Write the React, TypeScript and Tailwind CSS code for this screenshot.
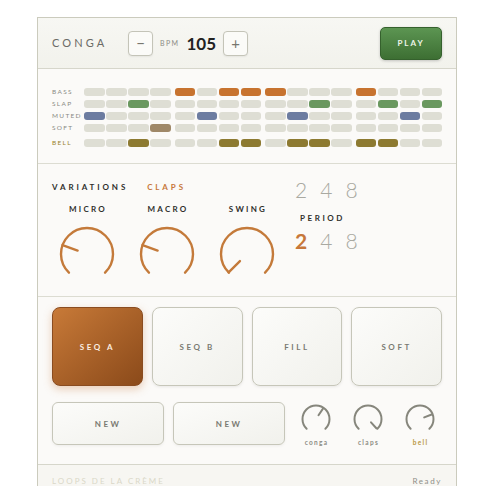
import React from 'react';

const font = { fontFamily: 'Lato, "Open Sans", sans-serif' };

type Row = { name: string; on: number[]; color: string; label: string };

const rows: Row[] = [
    { name: 'BASS', on: [5, 7, 8, 9, 13], color: 'bg-[#c7732f]', label: 'text-[#8a8a84]' },
    { name: 'SLAP', on: [3, 11, 14, 16], color: 'bg-[#6a985f]', label: 'text-[#8a8a84]' },
    { name: 'MUTED', on: [1, 6, 10, 15], color: 'bg-[#6c7ca0]', label: 'text-[#8a8a84]' },
    { name: 'SOFT', on: [4], color: 'bg-[#9f8868]', label: 'text-[#8a8a84]' },
    { name: 'BELL', on: [3, 7, 8, 10, 11, 13, 14], color: 'bg-[#8d7a31]', label: 'text-[#9a8430]' },
];

function Knob({ size, r, angle, color, width, inner, outer }: { size: number; r: number; angle: number; color: string; width: number; inner: number; outer: number }) {
    const c = size / 2;
    const rad = (a: number) => (a * Math.PI) / 180;
    const pt = (a: number, rr: number) => [c + rr * Math.sin(rad(a)), c - rr * Math.cos(rad(a))];
    const [sx, sy] = pt(-136, r);
    const [ex, ey] = pt(136, r);
    const [ix, iy] = pt(angle, inner);
    const [ox, oy] = pt(angle, outer);
    return (
        <svg width={size} height={size} viewBox={`0 0 ${size} ${size}`}>
            <path d={`M ${sx} ${sy} A ${r} ${r} 0 1 1 ${ex} ${ey}`} fill="none" stroke={color} strokeWidth={width} strokeLinecap="round" />
            <line x1={ix} y1={iy} x2={ox} y2={oy} stroke={color} strokeWidth={width} strokeLinecap="round" />
        </svg>
    );
}

function Pad({ label, active }: { label: string; active?: boolean }) {
    if (active) {
        return (
            <div className="flex-1 h-[79px] rounded-[8px] flex items-center justify-center bg-gradient-to-br from-[#c87a38] to-[#8b4a1a] border border-[#8a4c20] shadow-[0_3px_8px_rgba(200,120,60,0.35)]">
                <span className="text-[8px] font-bold tracking-[0.32em] text-[#fbeee2]">{label}</span>
            </div>
        );
    }
    return (
        <div className="flex-1 h-[79px] rounded-[8px] flex items-center justify-center bg-gradient-to-br from-[#fcfcfa] to-[#f1f1ec] border border-[#c6c6b9] shadow-[0_1px_3px_rgba(0,0,0,0.08)]">
            <span className="text-[8px] font-bold tracking-[0.32em] text-[#7a7a72]">{label}</span>
        </div>
    );
}

export default function App() {
    return (
        <div className="w-[486px] h-[486px] bg-white overflow-hidden" style={font}>
            <div className="ml-[37px] mt-[17px] w-[420px] border border-[#cbcbbd] bg-[#fbfaf8]">
                {/* header */}
                <div className="h-[51px] px-[14px] flex items-center border-b border-[#d6d6cb] bg-gradient-to-b from-[#f7f7f3] to-[#f2f2ec]">
                    <span className="w-[76px] text-[11px] tracking-[0.28em] text-[#6b6b66]">CONGA</span>
                    <button className="w-[25px] h-[25px] rounded-[4px] border border-[#c4c4b8] bg-[#fbfbf8] flex items-center justify-center text-[#77776f] text-[15px] leading-none shadow-[0_1px_2px_rgba(0,0,0,0.06)]">−</button>
                    <span className="ml-[7px] text-[7px] tracking-[0.2em] text-[#8c8c86]">BPM</span>
                    <span className="ml-[7px] text-[17px] font-bold text-[#222] leading-none">105</span>
                    <button className="ml-[7px] w-[25px] h-[25px] rounded-[4px] border border-[#c4c4b8] bg-[#fbfbf8] flex items-center justify-center text-[#77776f] text-[15px] leading-none shadow-[0_1px_2px_rgba(0,0,0,0.06)]">+</button>
                    <div className="ml-auto w-[62px] h-[33px] rounded-[5px] bg-gradient-to-b from-[#5c9552] to-[#3d6f33] border border-[#35612d] flex items-center justify-center shadow-[0_1px_3px_rgba(0,0,0,0.2)]">
                        <span className="text-[8px] font-bold tracking-[0.25em] text-[#eef5ea]">PLAY</span>
                    </div>
                </div>

                {/* grid */}
                <div className="pt-[19px] pb-[16px] px-[14px] border-b border-[#dcdcd2] flex flex-col gap-[4px]">
                    {rows.map((row) => (
                        <div key={row.name} className={`flex items-center h-[8px] ${row.name === 'BELL' ? 'mt-[3px]' : ''}`}>
                            <span className={`w-[32px] text-[6.5px] tracking-[0.2em] leading-none ${row.label}`}>{row.name}</span>
                            <div className="flex-1 flex gap-[4px]">
                                {[0, 1, 2, 3].map((g) => (
                                    <div key={g} className="flex-1 flex gap-[1.5px]">
                                        {[1, 2, 3, 4].map((k) => {
                                            const idx = g * 4 + k;
                                            const on = row.on.includes(idx);
                                            return <div key={k} className={`flex-1 h-[8px] rounded-[3px] ${on ? row.color : 'bg-[#deded4]'}`} />;
                                        })}
                                    </div>
                                ))}
                            </div>
                        </div>
                    ))}
                </div>

                {/* variations */}
                <div className="h-[133px] flex border-b border-[#dcdcd2]">
                    <div className="w-[257px] flex flex-col">
                        <div className="pl-[14px] pt-[17px] flex items-center gap-[19px]">
                            <span className="text-[8px] font-bold tracking-[0.36em] text-[#2f2f2c]">VARIATIONS</span>
                            <span className="text-[8px] font-bold tracking-[0.36em] text-[#c7773a]">CLAPS</span>
                        </div>
                        <div className="pl-[9px] pt-[10px] flex">
                            {[
                                { n: 'MICRO', a: -70 },
                                { n: 'MACRO', a: -70 },
                                { n: 'SWING', a: -135 },
                            ].map((k) => (
                                <div key={k.n} className="w-[80px] flex flex-col items-center">
                                    <span className="text-[8px] font-bold tracking-[0.28em] text-[#2f2f2c] pl-[2px]">{k.n}</span>
                                    <div className="mt-[9px]">
                                        <Knob size={60} r={26} angle={k.a} color="#c47a3a" width={2.4} inner={10} outer={26} />
                                    </div>
                                </div>
                            ))}
                        </div>
                    </div>
                    <div className="pt-[15px] flex flex-col">
                        <div className="flex gap-[13px] text-[21px] font-light text-[#a9a9a1] leading-none">
                            <span>2</span><span>4</span><span>8</span>
                        </div>
                        <span className="mt-[12px] ml-[5px] text-[8px] font-bold tracking-[0.32em] text-[#2f2f2c]">PERIOD</span>
                        <div className="mt-[6px] flex gap-[13px] text-[21px] font-light text-[#a9a9a1] leading-none">
                            <span className="font-bold text-[#c7773a]">2</span><span>4</span><span>8</span>
                        </div>
                    </div>
                </div>

                {/* pads */}
                <div className="px-[14px] pt-[10px] pb-[17px] border-b border-[#d6d6cb]">
                    <div className="flex gap-[9px]">
                        <Pad label="SEQ A" active />
                        <Pad label="SEQ B" />
                        <Pad label="FILL" />
                        <Pad label="SOFT" />
                    </div>
                    <div className="mt-[16px] flex items-start">
                        <div className="shrink-0 w-[112px] h-[43px] rounded-[6px] flex items-center justify-center bg-gradient-to-br from-[#fcfcfa] to-[#f1f1ec] border border-[#c6c6b9] shadow-[0_1px_3px_rgba(0,0,0,0.06)]">
                            <span className="text-[8px] font-bold tracking-[0.3em] text-[#7a7a72]">NEW</span>
                        </div>
                        <div className="shrink-0 ml-[9px] w-[112px] h-[43px] rounded-[6px] flex items-center justify-center bg-gradient-to-br from-[#fcfcfa] to-[#f1f1ec] border border-[#c6c6b9] shadow-[0_1px_3px_rgba(0,0,0,0.06)]">
                            <span className="text-[8px] font-bold tracking-[0.3em] text-[#7a7a72]">NEW</span>
                        </div>
                        <div className="shrink-0 ml-[5px] flex">
                            {[
                                { n: 'conga', a: 34, c: 'text-[#8c8c84]' },
                                { n: 'claps', a: 138, c: 'text-[#8c8c84]' },
                                { n: 'bell', a: 69, c: 'text-[#b8963f]' },
                            ].map((k) => (
                                <div key={k.n} className="shrink-0 w-[52px] flex flex-col items-center">
                                    <div className="mt-[1px]">
                                        <Knob size={32} r={13.5} angle={k.a} color="#86867c" width={2} inner={4.5} outer={12.5} />
                                    </div>
                                    <span className="mt-[5px] text-[6.5px] font-bold tracking-[0.2em] text-center pl-[1px] leading-none">
                                        <span className={k.c}>{k.n}</span>
                                    </span>
                                </div>
                            ))}
                        </div>
                    </div>
                </div>

                {/* footer */}
                <div className="h-[40px] px-[14px] pt-[10px] flex items-start justify-between bg-[#f7f6f2]">
                    <span className="text-[8px] tracking-[0.25em] text-[#dad8c8]">LOOPS DE LA CRÈME</span>
                    <span className="text-[8px] tracking-[0.2em] text-[#8f8f88]">Ready</span>
                </div>
            </div>
        </div>
    );
}
